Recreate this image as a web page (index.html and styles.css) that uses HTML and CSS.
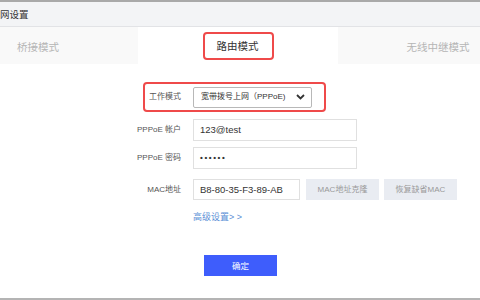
FILE: index.html
```html
<!DOCTYPE html>
<html lang="zh-CN">
<head>
<meta charset="utf-8">
<link rel="stylesheet" href="styles.css">
</head>
<body>
<div class="page">
  <div class="header"><span class="title">网设置</span></div>
  <div class="tabs">
    <div class="tab side">桥接模式</div>
    <div class="tab active"><span class="mark">路由模式</span></div>
    <div class="tab side">无线中继模式</div>
  </div>
  <div class="form">
    <div class="row highlight">
      <div class="label hl-label">工作模式</div>
      <div class="select">
        <span>宽带拨号上网（PPPoE)</span>
        <svg class="chev" width="9" height="6" viewBox="0 0 9 6"><polyline points="1,1 4.5,4.5 8,1" fill="none" stroke="#333" stroke-width="1.8"/></svg>
      </div>
    </div>
    <div class="row r2">
      <div class="label">PPPoE 帐户</div>
      <div class="input wide">123@test</div>
    </div>
    <div class="row r3">
      <div class="label">PPPoE 密码</div>
      <div class="input wide dots">••••••</div>
    </div>
    <div class="row r4">
      <div class="label">MAC地址</div>
      <div class="input mac">B8-80-35-F3-89-AB</div>
      <div class="btn-gray">MAC地址克隆</div>
      <div class="btn-gray">恢复缺省MAC</div>
    </div>
    <div class="advanced">高级设置&gt; &gt;</div>
    <div class="submit">确定</div>
  </div>
  <div class="footer-line"></div>
</div>
</body>
</html>
```

FILE: styles.css
```css
html, body {
  margin: 0;
  padding: 0;
  background: #ffffff;
}
body {
  font-family: "Liberation Sans", "Noto Sans CJK SC", sans-serif;
  color: #333;
}
.page {
  width: 480px;
  height: 300px;
  display: flex;
  flex-direction: column;
  overflow: hidden;
}
.header {
  height: 27px;
  box-sizing: border-box;
  border-top: 2px solid #a9a9a9;
  border-bottom: 1px solid #e2e3e6;
  background: #f3f4f6;
  display: flex;
  align-items: center;
  flex-shrink: 0;
}
.title {
  font-size: 9.5px;
  color: #333;
  line-height: 12px;
  padding-top: 2px;
}
.tabs {
  display: grid;
  grid-template-columns: 200px 200px 200px;
  margin-left: -62px;
  width: 600px;
  height: 37px;
  flex-shrink: 0;
}
.tab {
  display: flex;
  align-items: center;
  justify-content: center;
  font-size: 10.5px;
  line-height: 14px;
  padding-top: 2px;
}
.tab.side {
  background: #f9f9f9;
  color: #b5b5b5;
}
.tab.active {
  background: #ffffff;
  color: #333;
  padding-top: 0;
}
.mark {
  display: inline-block;
  border: 2px solid #ef4a4a;
  border-radius: 4px;
  padding: 6px 13px 5px 12px;
  line-height: 13px;
  font-size: 10.5px;
}
.form {
  display: flex;
  flex-direction: column;
  padding-top: 18px;
}
.row {
  display: flex;
  align-items: center;
  height: 22px;
}
.label {
  width: 181px;
  box-sizing: border-box;
  text-align: right;
  margin-right: 12px;
  font-size: 8px;
  color: #555;
  line-height: 10px;
  flex-shrink: 0;
}
.highlight {
  margin-left: 143px;
  width: 183px;
  height: 30px;
  box-sizing: border-box;
  border: 2px solid #ef4a4a;
  border-radius: 4px;
}
.hl-label {
  width: 36px;
  margin-right: 12px;
}
.select {
  width: 119px;
  height: 21px;
  box-sizing: border-box;
  border: 1px solid #b8b8b8;
  border-radius: 2px;
  display: flex;
  align-items: center;
  justify-content: space-between;
  padding: 0 6px 0 7px;
  font-size: 8px;
  color: #333;
  line-height: 10px;
}
.chev {
  display: block;
}
.input {
  height: 22px;
  box-sizing: border-box;
  border: 1px solid #e0e0e0;
  display: flex;
  align-items: center;
  padding-left: 6px;
  font-size: 9.5px;
  color: #333;
  line-height: 12px;
  flex-shrink: 0;
}
.wide {
  width: 164px;
}
.dots {
  font-size: 8px;
  letter-spacing: 1.6px;
  font-weight: bold;
}
.mac {
  width: 107px;
  height: 21px;
}
.r2 { margin-top: 7px; }
.r3 { margin-top: 6px; }
.r4 { margin-top: 10px; height: 21px; }
.btn-gray {
  width: 73px;
  height: 21px;
  margin-left: 6px;
  background: #e9ecf2;
  color: #999;
  font-size: 8px;
  line-height: 10px;
  display: flex;
  align-items: center;
  justify-content: center;
}
.btn-gray + .btn-gray {
  margin-left: 5px;
}
.advanced {
  margin-top: 11px;
  margin-left: 193px;
  font-size: 9px;
  line-height: 12px;
  color: #5b8fd6;
}
.submit {
  margin-top: 32px;
  margin-left: 204px;
  width: 73px;
  height: 21px;
  background: #3e5dfc;
  color: #ffffff;
  font-size: 8.5px;
  line-height: 10px;
  display: flex;
  align-items: center;
  justify-content: center;
}
.footer-line {
  margin-top: auto;
  height: 2px;
  background: #b4b4b4;
  flex-shrink: 0;
}
```
